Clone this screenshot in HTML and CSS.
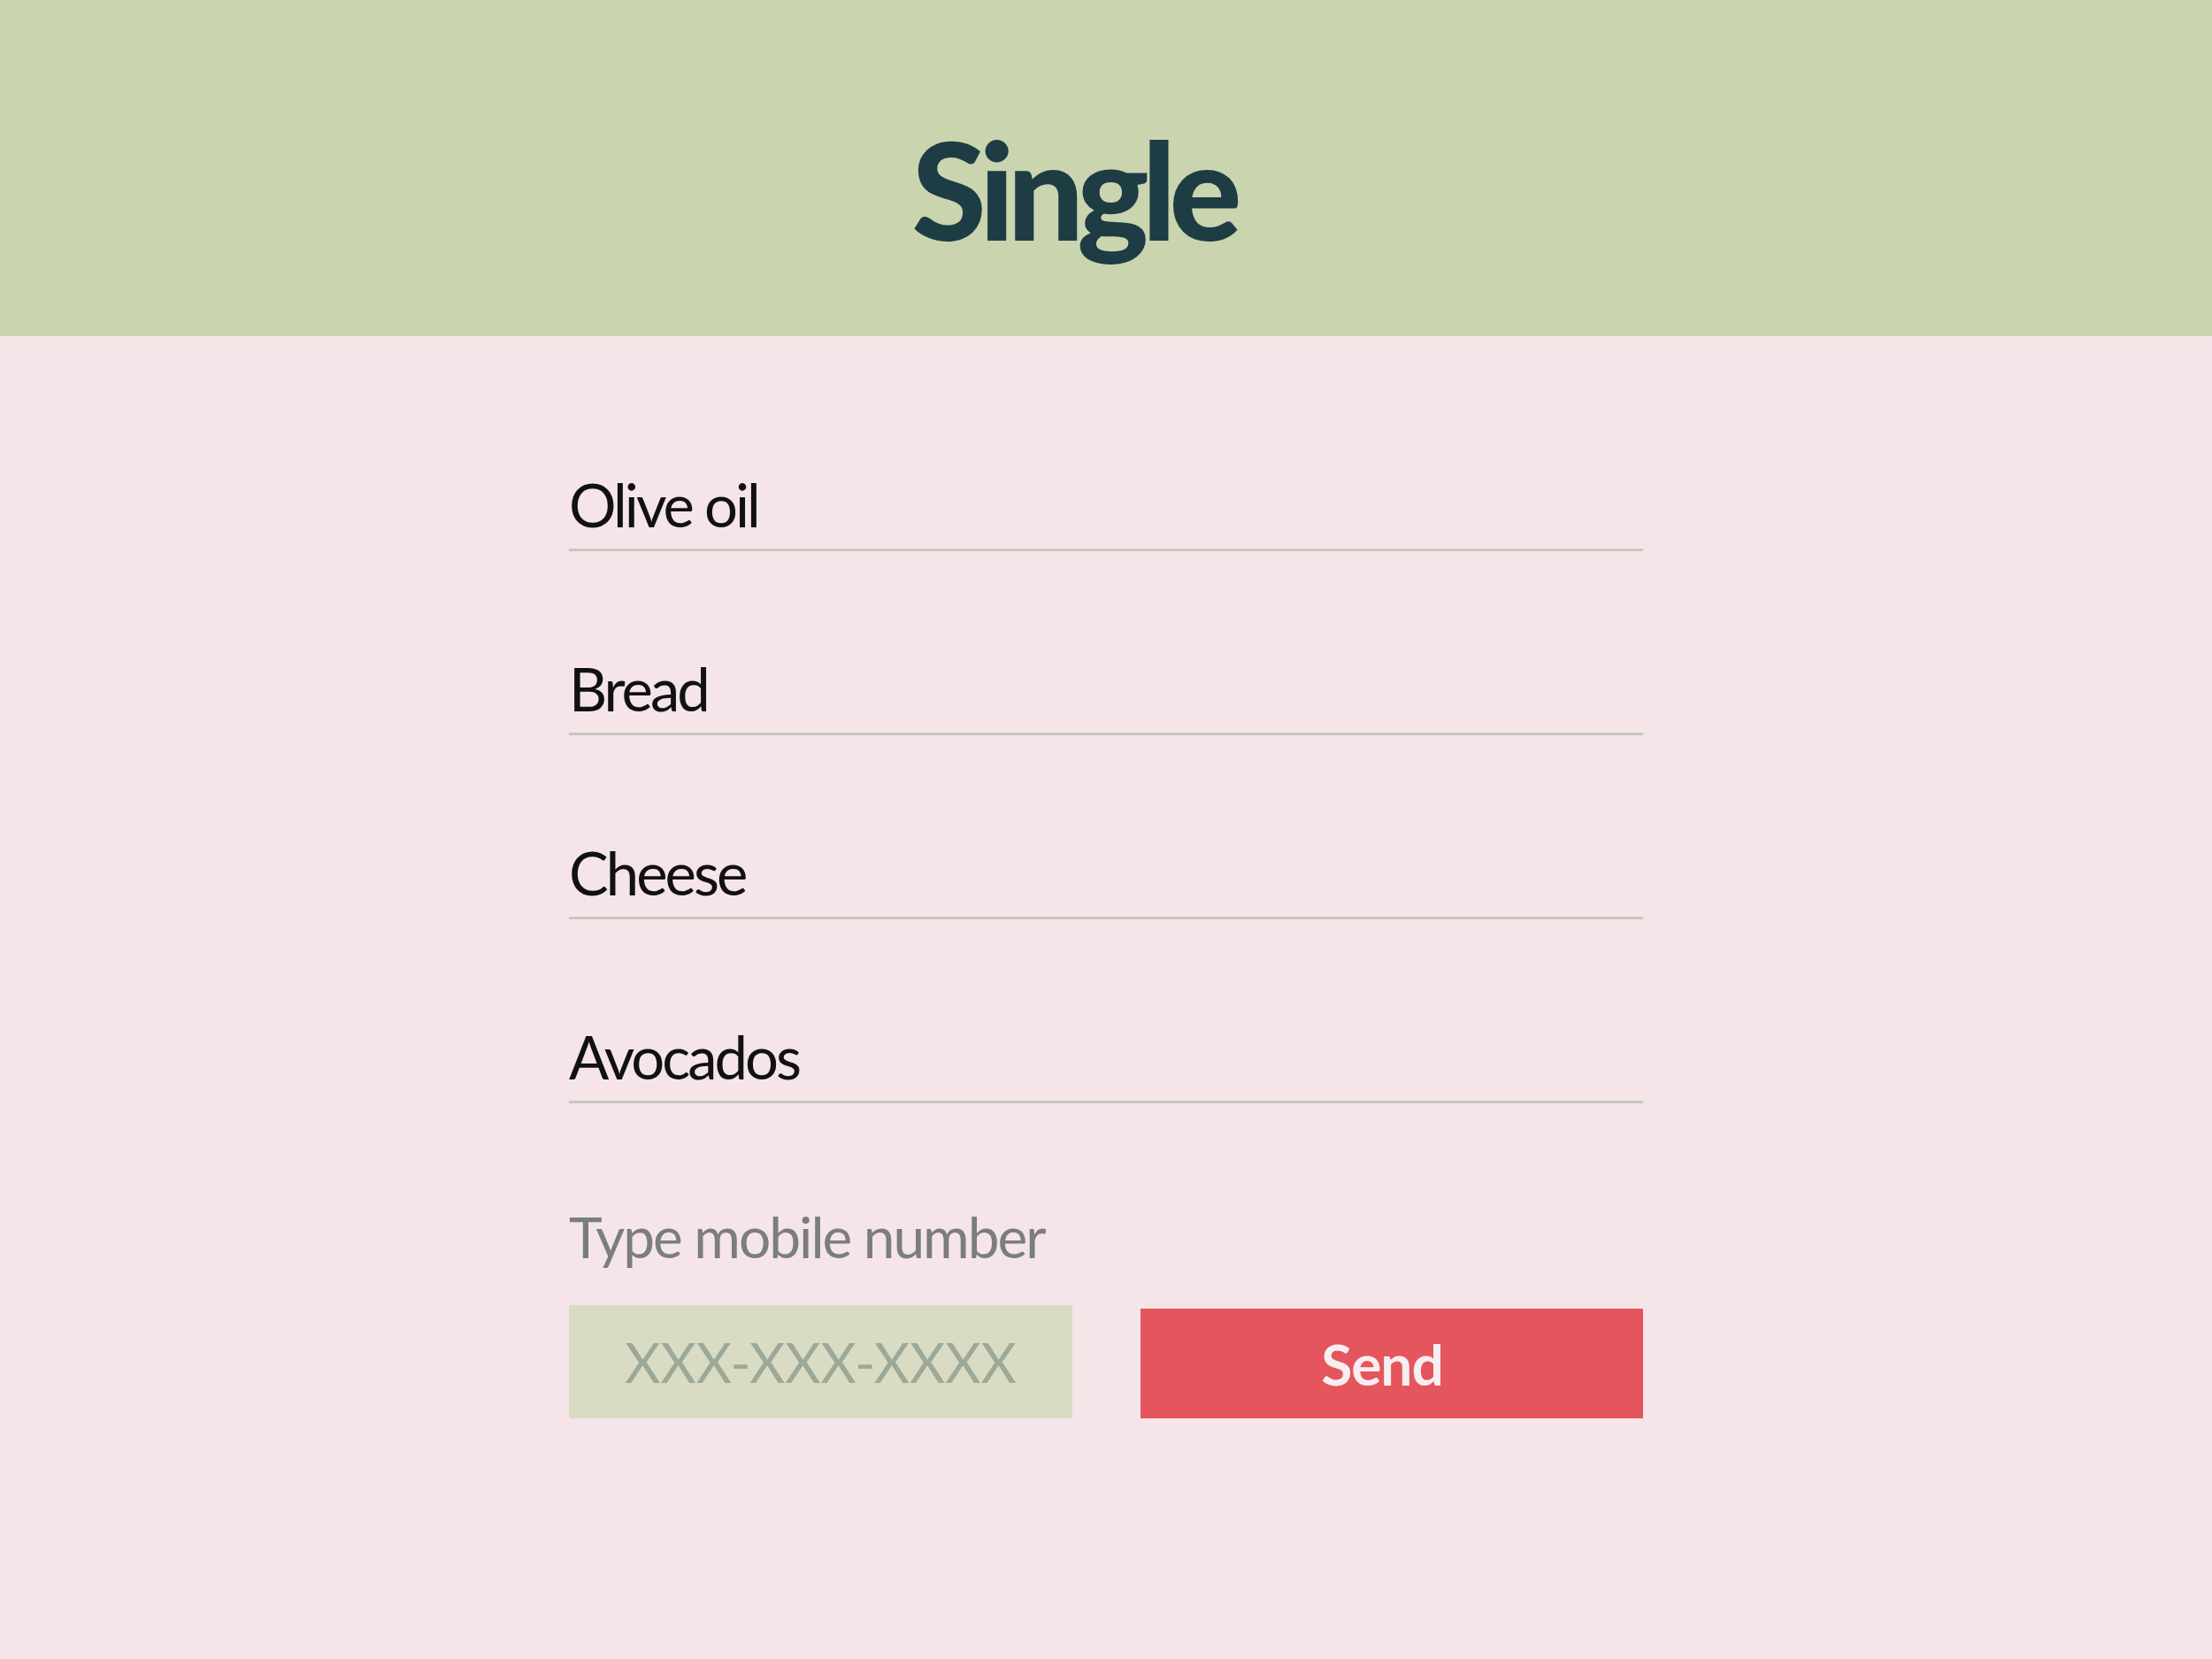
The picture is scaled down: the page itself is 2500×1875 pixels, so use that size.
FILE: index.html
```html
<!DOCTYPE html>
<html lang="en">
<head>
<meta charset="utf-8">
<title>Single</title>
<link rel="stylesheet" href="styles.css">
</head>
<body>
<header class="top">
  <h1 class="title">Single</h1>
</header>
<main class="list">
  <div class="item">Olive oil</div>
  <div class="item">Bread</div>
  <div class="item">Cheese</div>
  <div class="item">Avocados</div>
  <div class="label">Type mobile number</div>
  <form class="send-row">
    <input class="phone" type="text" placeholder="XXX-XXX-XXXX">
    <button class="send" type="button">Send</button>
  </form>
</main>
</body>
</html>
```
FILE: styles.css
```css
html, body {
  margin: 0;
  padding: 0;
}
body {
  background: #f5e5e8;
  font-family: Lato, "Open Sans", sans-serif;
  min-height: 1875px;
}
.top {
  height: 380px;
  background: #cad5b0;
  display: flex;
  justify-content: center;
  align-items: flex-start;
  padding-right: 74px;
  box-sizing: border-box;
}
.title {
  margin: 0;
  padding-top: 138px;
  font-size: 153px;
  line-height: 150px;
  font-weight: 900;
  color: #1d3c44;
  letter-spacing: -8px;
}
.list {
  width: 1214px;
  margin: 0 auto;
  padding-top: 150px;
  display: flex;
  flex-direction: column;
}
.item {
  font-size: 67px;
  line-height: 80px;
  letter-spacing: -3px;
  color: #111111;
  padding-bottom: 10px;
  border-bottom: 3px solid #c4c8c1;
  margin-bottom: 115px;
}
.item:last-of-type {
  margin-bottom: 109px;
}
.label {
  font-size: 64px;
  line-height: 80px;
  letter-spacing: -2px;
  color: #7a7e7c;
  margin-top: -4px;
}
.send-row {
  margin: 37px 0 0;
  display: flex;
  justify-content: space-between;
  align-items: center;
}
.phone {
  width: 569px;
  height: 128px;
  box-sizing: border-box;
  border: none;
  outline: none;
  background: #d9dbc3;
  font-family: Lato, "Open Sans", sans-serif;
  font-size: 62px;
  letter-spacing: 0;
  text-align: center;
  color: #333;
  padding: 0;
}
.phone::placeholder {
  color: #9ca999;
  opacity: 1;
}
.send {
  width: 568px;
  height: 124px;
  border: none;
  background: #e5555d;
  color: #f7eef0;
  font-family: Lato, "Open Sans", sans-serif;
  font-weight: 700;
  font-size: 64px;
  letter-spacing: -1px;
  padding: 0 22px 0 0;
  margin-top: 4px;
}
```
